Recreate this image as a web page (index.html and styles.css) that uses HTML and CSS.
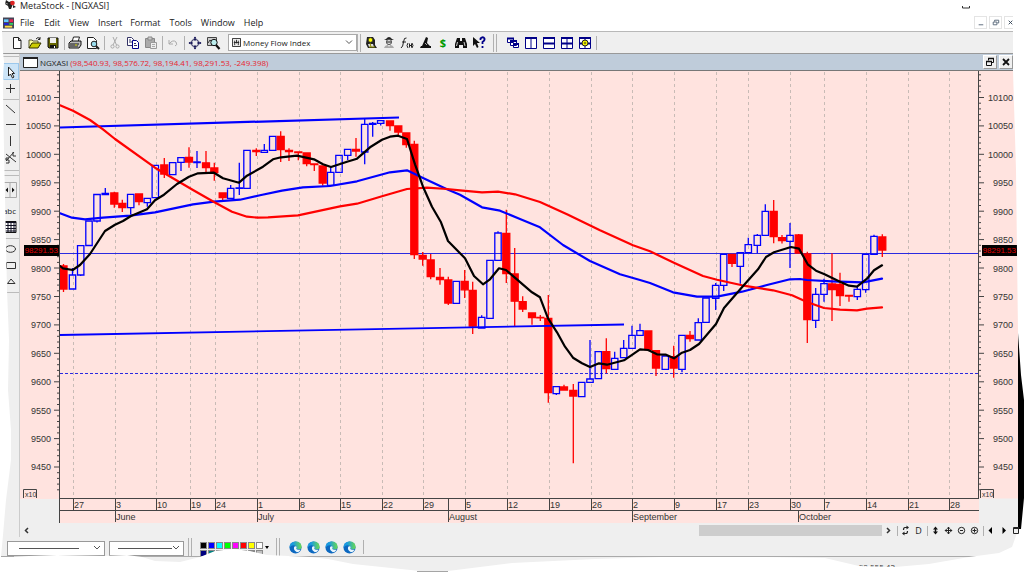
FILE: index.html
```html
<!DOCTYPE html>
<html lang="en">
<head>
<meta charset="utf-8">
<title>MetaStock - [NGXASI]</title>
<link rel="stylesheet" href="styles.css">
</head>
<body>
<div class="app">
  <header class="titlebar">
    <svg class="logo" viewBox="0 0 12 10"><path d="M1 0l3 2 3-1 1 3-2 5H4L3 6 0 4z" fill="#222"/><circle cx="7.500" cy="3" r="2.300" fill="#d22"/><path d="M8 5l3 2-3 1z" fill="#222"/><path d="M0 3l3 1" stroke="#888"/></svg>
    <span>MetaStock - [NGXASI]</span>
    <svg class="min-mark" viewBox="0 0 8 3"><path d="M.5 0v2h7V0" fill="none" stroke="#333"/></svg>
  </header>

  <nav class="menubar">
    <svg class="doc-icon" viewBox="0 0 12 12"><path fill="#445" d="M0 0h12v12H0z"/><path fill="#6cf" d="M1 2h5v3H1z"/><path fill="#e25" d="M7 2h4v3H7z"/><path fill="#22d" d="M1 6h5v2H1z"/><path fill="#3c6" d="M7 6h4v2H7z"/><path fill="#fd4" d="M2 9h8v2H2z"/></svg>
    <button class="m m-file">File</button><button class="m m-edit">Edit</button><button class="m m-view">View</button><button class="m m-insert">Insert</button><button class="m m-format">Format</button><button class="m m-tools">Tools</button><button class="m m-window">Window</button><button class="m">Help</button>
    <span class="mdi-buttons">
      <button aria-label="Minimize"><svg viewBox="0 0 12 12"><path d="M4 8.500h5" stroke="#567"/></svg></button>
      <button aria-label="Restore"><svg viewBox="0 0 12 12"><path d="M5 5V3.500h4.500V6.500H8M3.500 5.500h4v3h-4z" fill="none" stroke="#567"/></svg></button>
      <button aria-label="Close"><svg viewBox="0 0 12 12"><path d="M4 4l4 4M8 4L4 8" stroke="#345"/></svg></button>
    </span>
  </nav>

  <div class="toolbar">
    <button aria-label="New"><svg viewBox="0 0 16 16"><path d="M4.500 2.500h5l2.500 3v8H4.500z" fill="#fff" stroke="#222"/><path d="M9.500 2.500v3H12" fill="none" stroke="#222"/></svg></button>
    <button aria-label="Open"><svg viewBox="0 0 16 16"><path d="M2 13V5h3l1 1h5v2" fill="#ffffa0" stroke="#553" /><path d="M2 13l3-5h9l-3 5z" fill="#cc0" stroke="#330"/><path d="M9 4q2-3 4 0M13 2v2.500h-2" fill="none" stroke="#222"/></svg></button>
    <button aria-label="Save"><svg viewBox="0 0 16 16"><path d="M3 3h10v10H4l-1-1z" fill="#660" stroke="#111"/><path d="M5 3h6v5H5z" fill="#eee"/><path d="M5 10h6v3H5z" fill="#111"/><path d="M9 11h1v2H9z" fill="#fff"/></svg></button>
    <i class="sep"></i>
    <button aria-label="Print"><svg viewBox="0 0 16 16"><path d="M5 7l1.500-5h6L11 7" fill="#fff" stroke="#222"/><path d="M2 8l2-2h10v4l-2 3H2z" fill="#bbb" stroke="#111"/><path d="M3 9h9M3 11h8" stroke="#111"/><path d="M8 10h2" stroke="#dd0"/></svg></button>
    <button aria-label="Print preview"><svg viewBox="0 0 16 16"><path d="M2.500 2.500h6l3 3v8h-9z" fill="#fff" stroke="#222"/><circle cx="9" cy="9" r="2.800" fill="#9de" stroke="#222"/><path d="M11 11l3 3" stroke="#222" stroke-width="2"/></svg></button>
    <i class="sep"></i>
    <button aria-label="Cut"><svg viewBox="0 0 16 16"><path d="M6 2l3.500 8M10 2L6 10" fill="none" stroke="#aaa"/><circle cx="5.500" cy="11.500" r="1.600" fill="none" stroke="#aaa"/><circle cx="10.500" cy="11.500" r="1.600" fill="none" stroke="#aaa"/></svg></button>
    <button aria-label="Copy"><svg viewBox="0 0 16 16"><path d="M2.500 2.500h4l2 2v6h-6z" fill="#fff" stroke="#336"/><path d="M7.500 5.500h4l2 2v6h-6z" fill="#fff" stroke="#008"/><path d="M4 5h2M4 7h3M9 8.500h2M9 10.500h3" stroke="#336"/></svg></button>
    <button aria-label="Paste"><svg viewBox="0 0 16 16"><path d="M2.500 3.500h9v9h-9z" fill="#aaa" stroke="#888"/><path d="M5 2h4v3H5z" fill="#ccc" stroke="#888"/><path d="M7.500 7.500h6v6h-6z" fill="#eee" stroke="#999"/><path d="M9 9.500h3M9 11.500h3" stroke="#aaa"/></svg></button>
    <i class="sep"></i>
    <button aria-label="Undo"><svg viewBox="0 0 16 16"><path d="M4 5v4h4M4 9q4-5 7-2 2 3-1 4" fill="none" stroke="#aaa"/></svg></button>
    <i class="sep"></i>
    <button aria-label="Crosshair"><svg viewBox="0 0 16 16"><circle cx="8" cy="8" r="3.700" fill="none" stroke="#225"/><path d="M8 2v4M8 10v4M2 8h4M10 8h4" stroke="#115"/><path d="M8 1.500L6.500 3.500h3zM8 14.500l-1.500-2h3zM1.500 8l2-1.500v3zM14.500 8l-2-1.500v3z" fill="#115"/></svg></button>
    <button aria-label="Zoom"><svg viewBox="0 0 16 16"><path d="M2.500 2.500h9v8h-9z" fill="#ccc" stroke="#444"/><path d="M3 8l2-3 2 2 3-3" fill="none" stroke="#333"/><circle cx="9" cy="7.500" r="3.200" fill="#bee" stroke="#111"/><path d="M11 10l3.500 4" stroke="#111" stroke-width="2.200"/></svg></button>
    <label class="combo">
      <svg viewBox="0 0 10 10"><path d="M.5.5h9v9h-9z" fill="#eee" stroke="#222"/><path d="M3 3v5M5 2v4M7 3v5M2 5h6" stroke="#222"/></svg>
      <select aria-label="Indicator"><option>Money Flow Index</option></select>
      <svg class="chev" viewBox="0 0 8 8"><path d="M1 2l3 3 3-3" fill="none" stroke="#555"/></svg>
    </label>
    <i class="sep seam"></i>
    <button aria-label="Expert advisor"><svg viewBox="0 0 16 16"><path d="M4 2h6l2 3v5l2 3H5L3 9z" fill="#222"/><circle cx="7.500" cy="5" r="2.200" fill="#ff0" stroke="#333" stroke-width=".6"/><path d="M5 9h5l1 3H6z" fill="#ddd"/><path d="M7 8l1 4M6 12h6" stroke="#880"/></svg></button>
    <button aria-label="Explorer"><svg viewBox="0 0 16 16"><path d="M5 4q3-4 6 0l2 1H3z" fill="#222"/><circle cx="8" cy="7" r="2.600" fill="#ddd" stroke="#555"/><path d="M6 7h4" stroke="#222"/><path d="M3 13q1-3 4-3l1 2 1-2q3 0 4 3z" fill="#aaa"/></svg></button>
    <button aria-label="Indicator builder"><svg viewBox="0 0 16 16"><path d="M7.500 3q-2.500-1-3 4t-2.500 6M3 7h4M9 8q-2 2.500 0 5M13 8q2 2.500 0 5M10.500 8.500v4M12.500 8.500v4M10.500 10.500h2" fill="none" stroke="#222"/></svg></button>
    <button aria-label="System tester"><svg viewBox="0 0 16 16"><path d="M9 2L5 11h8l-3-3 1-5zM3 13h11v-2H4z" fill="#111"/><path d="M8 8l2 2" stroke="#aaa"/></svg></button>
    <button class="dollar" aria-label="Downloader">$</button>
    <button aria-label="Find"><svg viewBox="0 0 16 16"><path d="M4 3h3v3h2V3h3l2 6v4h-4v-3H6v3H2V9z" fill="#111"/><path d="M4.500 7L3.500 11M11 7l1 4" stroke="#ccc"/></svg></button>
    <button aria-label="Context help"><svg viewBox="0 0 16 16"><path d="M2 2v9l2-2 2 4 1.500-1L6 8h3z" fill="#111"/><path d="M9.500 5V3.500q2.500-2.500 4 0 .5 2-2 3.500v2M11.500 11v2" fill="none" stroke="#008" stroke-width="1.800"/></svg></button>
    <i class="sep seam wide"></i>
    <button aria-label="Cascade"><svg viewBox="0 0 16 16"><path d="M2.500 3.500h6v4h-6zM5.500 6.500h6v4h-6zM8.500 8.500h5v4h-5z" fill="#fff" stroke="#008"/><path d="M2 3.500h7M5 6h7M8 9h6" stroke="#008" stroke-width="2"/></svg></button>
    <button aria-label="Tile columns"><svg viewBox="0 0 16 16"><path d="M2.500 2.500h11v11h-11zM8 3v10" fill="#fff" stroke="#008"/><path d="M2 3h12" stroke="#008" stroke-width="2"/></svg></button>
    <button aria-label="Tile rows"><svg viewBox="0 0 16 16"><path d="M2.500 2.500h11v11h-11z" fill="#fff" stroke="#008"/><path d="M2 3h12M2 8.500h12" stroke="#008" stroke-width="2"/></svg></button>
    <button aria-label="Tile grid"><svg viewBox="0 0 16 16"><path d="M2.500 2.500h11v11h-11zM8 3v10" fill="#fff" stroke="#008"/><path d="M2 3h12M2 8.500h12" stroke="#008" stroke-width="2"/></svg></button>
    <button aria-label="Layout options"><svg viewBox="0 0 16 16"><path d="M2.500 2.500h11v11h-11zM8 3v10" fill="#fff" stroke="#008"/><path d="M2 3h12M2 8.500h12" stroke="#008" stroke-width="2"/><circle cx="8" cy="8" r="3" fill="#ee0" stroke="#222"/><path d="M7 8h2" stroke="#222"/></svg></button>
    <i class="sep"></i>
  </div>

  <div class="workspace">
    <aside class="tools">
      <i class="grip"></i>
      <button class="on" aria-label="Select"><svg viewBox="0 0 16 16"><path d="M5.500 3v9l2-2 2 4 1.500-1-2-3.500h2.500z" fill="#fff" stroke="#222"/></svg></button>
      <button aria-label="Crosshair"><svg viewBox="0 0 16 16"><path d="M8.500 4v9M4 8.500h9" stroke="#333"/></svg></button>
      <i class="rule"></i>
      <button aria-label="Trendline"><svg viewBox="0 0 16 16"><path d="M4 4l9 8" stroke="#333"/></svg></button>
      <button aria-label="Horizontal line"><svg viewBox="0 0 16 16"><path d="M4 7.500h10" stroke="#333"/></svg></button>
      <button aria-label="Vertical line"><svg viewBox="0 0 16 16"><path d="M8.500 3v10" stroke="#333"/></svg></button>
      <button aria-label="Semilog trendline"><svg viewBox="0 0 16 16"><path d="M4 12L12 3M4 5l10 8M11 3v4h3M7 9H4v2h3v3H4" fill="none" stroke="#333"/></svg></button>
      <i class="gap"></i>
      <i class="grip"></i>
      <button class="pair" aria-label="Scroll tools"><svg viewBox="0 0 16 16"><path d="M1.500.5h13v15h-13zM8 .5v15" fill="#eee" stroke="#aaa"/><path d="M6 5.500v5L3.500 8zM10 5.500v5L12.500 8z" fill="#111"/></svg></button>
      <i class="rule none"></i>
      <button class="abc">abc</button>
      <button aria-label="Grid"><svg viewBox="0 0 16 16"><path d="M3 2.500h11v11H3z" fill="#fff" stroke="#111"/><path d="M3 3.500h11M3 6.500h11M3 9.500h11M3 12h11M6 3v10M9 3v10M12 3v10" stroke="#112"/></svg></button>
      <i class="rule tall"></i>
      <button aria-label="Ellipse"><svg viewBox="0 0 16 16"><ellipse cx="8.500" cy="8" rx="5" ry="3.300" fill="none" stroke="#333"/></svg></button>
      <button aria-label="Rectangle"><svg viewBox="0 0 16 16"><path d="M4.500 5.500h9v6h-9z" fill="none" stroke="#333"/></svg></button>
      <button aria-label="Triangle"><svg viewBox="0 0 16 16"><path d="M9 6l4 4.500H5.500z" fill="none" stroke="#333"/></svg></button>
      <i class="rule tall"></i>
    </aside>

    <main class="child">
      <div class="child-title">
        <svg viewBox="0 0 15 11"><path d="M.5.5h14v10H.5z" fill="#fff" stroke="#222"/><path d="M0 1h15" stroke="#222" stroke-width="2"/></svg>
        <span>NGXASI <b>(98,540.93, 98,576.72, 98,194.41, 98,291.53, -249.398)</b></span>
        <button class="push" aria-label="Restore chart"><svg viewBox="0 0 12 12"><path d="M4.500 4.500V2.500h5v4H8M2.500 5.500h5v4h-5z" fill="none" stroke="#111"/><path d="M4 2.500h6M2 5.500h6" stroke="#111" stroke-width="1.500"/></svg></button>
        <button aria-label="Close chart"><svg viewBox="0 0 12 12"><path d="M3 3l6 6M9 3L3 9" stroke="#111" stroke-width="1.800"/></svg></button>
      </div>
      <svg class="chart" id="chart" viewBox="20 71 1004 453" role="img" aria-label="NGXASI candlestick chart"></svg>
      <div class="scroll">
        <button aria-label="Scroll left"><svg viewBox="0 0 13 13"><path d="M8 4L5.500 6.500 8 9" fill="none" stroke="#333" stroke-width="1.500"/></svg></button>
        <div class="track"><div class="thumb"></div></div>
        <button aria-label="Scroll right"><svg viewBox="0 0 13 13"><path d="M5 4l2.500 2.500L5 9" fill="none" stroke="#333" stroke-width="1.500"/></svg></button>
        <i class="sep"></i>
        <button aria-label="Refresh"><svg viewBox="0 0 13 13"><path d="M8.500 3.500H6q-1.500 0-1.500 2.500M4.500 9.500H7q1.500 0 1.500-2.500" fill="none" stroke="#222" stroke-width="1.200"/><path d="M7.500 1.500v4l2.500-2zM5.500 7.500v4L3 9.500z" fill="#222"/></svg></button>
        <button class="per">D</button>
        <i class="sep"></i>
        <button aria-label="Expand vertical"><svg viewBox="0 0 13 13"><path d="M6.500 2.500L9 5.500H4zM6.500 10.500L9 7.500H4z" fill="#111"/><path d="M6.500 4v5" stroke="#111" stroke-width="1.500"/></svg></button>
        <button aria-label="Move"><svg viewBox="0 0 13 13"><path d="M6.500 3v7M3 6.500h7" stroke="#222"/><path d="M3 6.500l1.500-1.500v3zM10 6.500L8.500 5v3zM6.500 3L5 4.500h3zM6.500 10L5 8.500h3z" fill="#222" stroke="#222" stroke-width=".4"/></svg></button>
        <button aria-label="Zoom out"><svg viewBox="0 0 13 13"><circle cx="6.500" cy="6.500" r="3.200" fill="none" stroke="#222"/><path d="M5 6.500h3" stroke="#222"/></svg></button>
        <button aria-label="Zoom in"><svg viewBox="0 0 13 13"><circle cx="6.500" cy="6.500" r="3.200" fill="none" stroke="#222"/><path d="M4.500 6.500h4M6.500 4.500v4" stroke="#222"/></svg></button>
        <i class="sep"></i>
        <button aria-label="Previous"><svg viewBox="0 0 13 13"><path d="M7 3v7L3.500 6.500z" fill="#000"/></svg></button>
        <button aria-label="Next"><svg viewBox="0 0 13 13"><path d="M4.500 3v7L8 6.500z" fill="#000"/></svg></button>
        <button class="over" aria-label="Window"><svg viewBox="0 0 13 13"><path d="M2.500 3.500h5v6h-5zM2 4.500h6" fill="#efefef" stroke="#222"/></svg></button>
      </div>
    </main>
  </div>

  <div class="bottombar">
    <label class="style-pick long"><select aria-label="Line style"><option></option></select><svg viewBox="0 0 8 8"><path d="M1 2l3 3 3-3" fill="none" stroke="#555"/></svg></label>
    <label class="style-pick"><select aria-label="Line weight"><option></option></select><svg viewBox="0 0 8 8"><path d="M1 2l3 3 3-3" fill="none" stroke="#555"/></svg></label>
    <i class="sep seam"></i>
    <div class="palette">
      <button class="sw k" aria-label="Black"></button><button class="sw b" aria-label="Blue"></button><button class="sw c" aria-label="Cyan"></button><button class="sw g" aria-label="Green"></button><button class="sw p" aria-label="Magenta"></button><button class="sw r" aria-label="Red"></button><button class="sw y" aria-label="Yellow"></button><button class="sw w" aria-label="White"></button>
      <button class="sw nv" aria-label="Navy"></button><button class="sw tl" aria-label="Teal"></button><button class="sw dg" aria-label="Dark green"></button><button class="sw pu" aria-label="Purple"></button><button class="sw ma" aria-label="Maroon"></button><button class="sw ol" aria-label="Olive"></button><button class="sw gr" aria-label="Gray"></button><button class="sw si" aria-label="Silver"></button>
    </div>
    <button class="drop" aria-label="More colors"><svg viewBox="0 0 8 8"><path d="M2 3h4L4 6z" fill="#000"/></svg></button>
    <i class="sep seam"></i>
    <div class="edges" id="edges"></div>
    <i class="sep"></i>
  </div>
  <footer class="status"><span>98,555.42</span></footer>

  <svg class="torn" viewBox="0 0 1024 573" preserveAspectRatio="none" aria-hidden="true">
    <path fill="#fff" d="M0 31H2L3 52 4 62 3 90 4 150 7 290 9 340 8 390 11 430 11 460 6 500 3 535 1 557 57 555 105 556 127 555 142 557 155 561 180 562 200 557 215 551 233 549 250 551 267 555 310 557 328 559 353 564 420 571 448 571 512 563 595 559 662 557H763L825 558 859 566 895 567 929 564 969 557 999 553 1012 547 1018 530 1018 333 1016 170 1013 71V0H1024V573H0z"/>
    <path fill="#000" d="M1018 333l3 42 3 25v98l-3 31h-3z"/>
    <path stroke="#a5a5a5" d="M1 556.500h13M417 571.500h31"/>
  </svg>
</div>
<script src="chart.js"></script>
</body>
</html>
```
FILE: styles.css
```css
* { box-sizing: border-box; }
body { margin: 0; background: #fff; font-family: "Open Sans", "Noto Sans", sans-serif; font-size: 9px; color: #222; }
button { border: 0; padding: 0; margin: 0; background: none; font: inherit; color: inherit; line-height: 1; display: flex; align-items: center; justify-content: center; }
svg { display: block; }
i { flex: none; }
.app { position: relative; min-height: 100vh; display: flex; flex-direction: column; overflow: hidden; }
.titlebar { height: 14px; display: flex; align-items: flex-start; padding: 0 54px 0 5px; gap: 3px; line-height: 12px; }
.logo { width: 12px; height: 10px; }
.min-mark { width: 8px; height: 3px; margin: 6px 0 0 auto; }
.menubar { height: 18px; display: flex; align-items: center; padding: 0 7px 0 3px; border-bottom: 1px solid #b8b8b8; }
.doc-icon { width: 11px; height: 12px; margin-right: 6px; }
.m { height: 16px; margin-right: 9px; }
.m-file { margin-right: 10px; }
.m-insert { margin-right: 8px; }
.mdi-buttons { margin-left: auto; display: flex; gap: 2px; }
.mdi-buttons button { border: 1px solid #e4e4e4; width: 13px; height: 13px; }
.mdi-buttons svg { width: 11px; height: 11px; }
.toolbar { height: 22px; background: #efefef; display: flex; align-items: center; padding-left: 8px; border-bottom: 1px solid #999; }
.toolbar button { width: 18px; height: 18px; flex: none; }
.toolbar button svg { width: 16px; height: 16px; }
.sep { width: 4px; height: 14px; background: linear-gradient(90deg, transparent 2px, #b0b0b0 2px, #b0b0b0 3px, transparent 3px); }
.toolbar .seam { width: 5px; border-left: 1px solid #b0b0b0; height: 18px; }
.toolbar .wide { width: 5px; margin: 0 6px 0 5px; }
.combo { width: 129px; height: 17px; margin-left: 6px; background: #fff; border: 1px solid #aaa; display: flex; align-items: center; padding: 0 3px 0 3px; gap: 2px; }
.combo svg { width: 9px; height: 9px; flex: none; }
.combo .chev { width: 8px; }
.combo select { flex: 1; min-width: 0; border: 0; background: none; appearance: none; padding: 0; font: 8px "Open Sans", "Noto Sans", sans-serif; color: #222; }
.dollar { color: #090; font-weight: bold; font-size: 11px; }
.workspace { display: flex; background: #efefef; }
.tools { width: 20px; flex: none; display: flex; flex-direction: column; align-items: stretch; border-right: 1px solid #ccc; }
.tools button { height: 16px; }
.tools button svg { width: 16px; height: 16px; flex: none; }
.tools .on { height: 17px; background: #cce4f7; border: 1px solid #9cc8ec; margin-left: 3px; }
.grip { height: 9px; background: linear-gradient(transparent 2px, #bbb 2px, #bbb 3px, transparent 3px); }
.rule { height: 5px; background: linear-gradient(transparent 3px, #bbb 3px, #bbb 4px, transparent 4px); }
.none { background: none; }
.tall { height: 6px; }
.gap { height: 8px; background: linear-gradient(transparent 5px, #bbb 5px, #bbb 6px, transparent 6px); }
.tools .abc { font-size: 8px; }
.child { flex: 1; min-width: 0; }
.child-title { height: 17px; background: #bfccda; border-bottom: 1px solid #777; display: flex; align-items: center; padding: 0 11px 0 3px; gap: 2px; font-size: 8px; }
.child-title svg { width: 15px; height: 11px; }
.child-title b { font-weight: normal; color: #e8252f; }
.child-title button { width: 14px; height: 14px; background: #f0f0f0; border: 1px solid #fff; border-right-color: #999; border-bottom-color: #999; }
.child-title button svg { width: 12px; height: 12px; flex: none; }
.push { margin-left: auto; }
.chart { width: 100%; height: auto; background: #efefef; font-family: "Liberation Sans", Arial, sans-serif; font-size: 9px; }
.scroll { height: 13px; display: flex; align-items: center; }
.scroll button { width: 13px; height: 13px; flex: none; }
.scroll button svg { width: 13px; height: 13px; }
.scroll .sep { height: 10px; }
.scroll .over { position: relative; z-index: 2; }
.track { flex: 1; display: flex; justify-content: flex-end; }
.thumb { width: 21.5%; height: 11px; background: #cdcdcd; }
.per { font-size: 9px; }
.bottombar { height: 20px; background: #efefef; display: flex; align-items: center; padding-left: 7px; border-bottom: 1px solid #aaa; }
.style-pick { width: 75px; height: 15px; margin: 3px 4px 0 0; border: 1px solid #999; background: #fff; display: flex; align-items: center; padding-right: 3px; }
.style-pick select { flex: 1; min-width: 0; height: 13px; border: 0; appearance: none; background: linear-gradient(#555, #555) 8px 6px / 54px 1px no-repeat; }
.style-pick.long { width: 98px; }
.style-pick.long select { background-position: 11px 6px; background-size: 60px 1px; }
.style-pick svg { width: 8px; height: 8px; }
.bottombar .seam { width: 6px; height: 18px; border-left: 1px solid #b0b0b0; }
.palette { display: grid; grid-template-columns: repeat(8, 7px); gap: 1px; margin: 5px 0 0 6px; }
.sw { height: 7px; border: 1px solid #888; background: #000; }
.sw.b { background: #00f; } .sw.c { background: #0ff; } .sw.g { background: #0f0; } .sw.p { background: #f0f; } .sw.r { background: #f00; } .sw.y { background: #ff0; } .sw.w { background: #fff; }
.sw.nv { background: #000080; } .sw.tl { background: #008080; } .sw.dg { background: #008000; } .sw.pu { background: #800080; } .sw.ma { background: #800000; } .sw.ol { background: #808000; } .sw.gr { background: #808080; } .sw.si { background: #c0c0c0; }
.drop { width: 8px; height: 8px; margin-right: 5px; }
.drop svg { width: 8px; }
.edges { display: flex; gap: 5px; padding: 2px 5px 0 7px; }
.edges a, .edges svg { width: 13px; height: 13px; display: block; }
.status { flex: 1; min-height: 16px; background: #efefef; display: flex; justify-content: flex-end; }
.status span { margin-right: 129px; padding: 4px 0 0; line-height: 12px; color: #333; font-size: 8px; }
.torn { position: absolute; inset: 0; width: 100%; height: 100%; pointer-events: none; }
.txt { fill: #333; }
.end { text-anchor: end; }
.tag { fill: #e00000; font-size: 8px; }
.tiny { font-size: 7px; }
.up { fill: none; stroke: #00f; stroke-width: 1.300; }
.down { fill: #f00; stroke: #f00; stroke-width: 1.300; }
.grid { stroke: #c8bbb6; stroke-dasharray: 3 3; }
.axis { stroke: #444; fill: none; }
.level { stroke: #2a2ae0; fill: none; }
.ma { fill: none; stroke-width: 2.200; stroke-linejoin: round; stroke-linecap: round; }
```
FILE: chart.js
```js
// Candles: [x, high, body top, body bottom, low, 'u' rising | 'd' falling]
const candles = [
[63.5,264,266,289,292,'d'],[72.5,268,275,289,289,'u'],[80.7,245.7,245.7,275,276,'u'],[89,221,221,245.5,245.5,'u'],[97,194.5,194.5,221,222.5,'u'],[105.3,188,193.5,194.5,194.5,'u'],
[114.3,191.7,193,204,207.7,'d'],[122.3,199.7,203.5,207.5,212,'d'],[130.7,194.3,194.3,207.7,214.3,'u'],[139,193.7,194,201.5,205.3,'d'],[147.3,198.3,198.3,202.7,206.7,'u'],[155.3,165.3,165.3,197.7,197.7,'u'],
[164.3,158,165,174,178,'d'],[172.7,162.7,162.7,174.7,174.7,'u'],[181,157.7,157.7,162.3,171,'u'],[189,147.3,157.5,162,167.7,'d'],[197,151,162,162.6,168,'u'],[206,151,162.8,167.5,174,'d'],[214.3,162.7,168,172.5,180.7,'d'],[222.7,193,193,197.5,200.7,'d'],
[230.7,185,188.3,198.3,198.3,'u'],[239.3,162.7,187.8,188.4,195,'u'],[247,150.3,150.3,188.3,188.3,'u'],[256.3,148.3,150.5,151.5,156,'d'],[264.3,144,150.3,152.3,152.3,'u'],[272.7,136.3,136.3,150.3,150.3,'u'],[280.7,131.3,136.3,149.5,162,'d'],[289,148.3,150.5,151.5,161,'d'],
[298.3,152,152,152.5,160.3,'d'],[306.7,152.5,153,163.5,166.3,'d'],[314.3,164,164,164.5,171,'d'],[322.7,165.5,166,183,185.7,'d'],[330.7,167.3,172.3,185.3,185.3,'u'],[339,155.3,155.3,172.3,172.3,'u'],[347.7,149.3,149.3,155.3,160,'u'],[356,138,149.5,151,156.7,'d'],
[364.7,118.3,124.3,152,164.3,'u'],[372.7,122,123.5,124.3,136.7,'u'],[380.7,120.7,120.7,123.3,125.5,'u'],[390,120.5,121,125.5,130.7,'d'],[398.3,125.5,126,132,135.7,'d'],[406.3,132.5,133,144.5,147.7,'d'],[414.3,140.7,144.5,254.5,259,'d'],
[422.7,252,255.5,259,265.7,'d'],[430.7,254,260,276.5,279.3,'d'],[440,268,277.5,279.5,284.7,'d'],[448.3,276.7,280,303,305,'d'],[456.3,281.3,281.3,303.3,303.3,'u'],[464.7,270,281.5,289.8,298,'d'],[472.7,281.7,290.5,326.2,334,'d'],[481.7,315.3,317.3,328,328,'u'],
[490,260.3,260.3,318.3,318.3,'u'],[498,231.3,233,260.3,260.3,'u'],[506.3,209.7,233.5,273.5,283,'d'],[514.7,248,274,301.2,326.3,'d'],[522.7,296.3,301.7,309,312,'d'],[532,312.5,313,317.5,324.7,'d'],[540.3,315,317.3,317.8,321,'d'],[548.3,295,318.5,392.5,402.7,'d'],
[556.3,386.7,386.7,393.7,395,'u'],[564,384.7,387,390,390.5,'d'],[573.3,384,390.5,396,463.3,'d'],[581.7,382.3,382.3,396.7,396.7,'u'],[590,340,379,382.3,382.3,'u'],[598.3,351.7,351.7,378.7,378.7,'u'],[606.3,338.3,351.7,368.5,373.3,'d'],[614.7,351.7,358.3,369.3,369.3,'u'],
[623.7,340,348.3,357.7,357.7,'u'],[632,325.7,335.3,348.3,348.3,'u'],[640,323.7,330.7,335.3,335.3,'u'],[648.3,331,331,349.5,349.5,'d'],[656,350,350.7,368,376,'d'],[665.3,356,356,369.3,369.3,'u'],[673.7,345.7,356.7,368,377.7,'d'],[682,335.3,335.3,369.3,372.3,'u'],
[690,331,335.3,338.7,341.7,'d'],[698.3,318.3,322.7,340,340,'u'],[706,298,298,322.3,322.3,'u'],[715.7,283,285.3,298.3,310,'u'],[723.7,254.3,254.3,285.3,291,'u'],[732,254.5,254.5,263.3,267,'d'],[740.3,252.7,252.7,266.3,283.7,'u'],[748.3,237.7,244.7,252.7,252.7,'u'],
[757.3,234,235.3,245.3,253.3,'u'],[765.3,204.3,211.3,235.3,235.3,'u'],[773.7,200,211.3,236.7,243.3,'d'],[782,235,237.7,240.5,243.5,'d'],[790,223,235.3,241.3,268,'u'],[798.7,234,235,253,253,'d'],[807.3,251.7,254,319.7,343,'d'],[815.7,288,294.3,320.3,328,'u'],
[824,278.7,283.7,294.3,301.7,'u'],[832,253.3,284,289.7,321,'d'],[840,272.7,284.3,295.7,306,'d'],[849,295.5,295.5,296,301.7,'d'],[857.3,286.7,289.3,296.7,300,'u'],[865.7,254.3,254.3,289.7,292.7,'u'],[874,234.7,236.3,254.3,254.3,'u'],[882.3,234.3,237,250,257,'d']
];
const redMA = "60,105.3 73,110.700 90,120 103,129.300 115,139 155,167.700 193,190 214,202 232,211.700 247,216.700 258,217.700 268,217.300 298,215.300 340,206.300 357,203.700 382,196.300 407,189 427,187.700 447,189 460,190.300 482,192.300 498,191.700 515,194.300 540,202 567,214.300 600,230.300 633,245.300 650,251.300 675,263.300 703,276 717,279.700 742,285.300 773,290.300 792,295.300 807,302 824,308 840,309.700 857,310.300 867,308.700 882,307.300";
const blueMA = "60,213.300 72,217.700 85,219.300 103,217.700 130,215.700 155,212.300 193,204.300 214,201.700 240,199.700 260,195.300 282,190.700 303,187.300 330,186 357,181.300 390,172.300 407,170.300 423,178 447,189.300 460,194.700 482,207.300 500,210.700 520,219 540,227.300 563,245 590,261 620,274.300 640,280 650,283 673,292.300 697,296.700 717,296.700 742,291.700 767,285 790,279.300 800,279 807,280 832,281.300 863,282.300 882,278.700";
const blackMA = "60,266 63,268.300 72.700,270 80,265 90,254 105,231 115,224.700 123,221 131,216 147,209.300 155,200.300 164,194.700 177,184 189,176.700 198,173.300 214,172.700 223,178.300 239,182.700 247,175.700 263,166.700 273,159.300 281,157.300 297,155.700 314,159.300 323,164.300 331,167 347,161.700 357,158.700 370,147.300 382,139.700 390,136.700 398,135.700 407,139 415,164.300 423,186.700 432,206.700 441,222.300 448,241 465,258.300 474,276 483,284.300 490,279.300 499,268.300 506,270 532,292.300 540,297.300 548,318.300 557,332.300 565,346.700 573,357.700 582,363.300 590,367 599,363.300 607,364.700 624,360.300 640,349.300 648,350 657,354.300 666,354.700 674,358.300 682,352.700 690,350 699,344 716,324 724,308 742,287.300 758,269.300 766,257 774,252.300 791,247 799,248.700 808,264.700 816,270.700 824,274 840,281.700 849,285.700 857,286.700 867,278.700 874,270.300 882,265.300";
const days = [[73,'27'],[115,'3'],[156,'10'],[190,'19'],[215,'24'],[257,'1'],[299,'8'],[340,'15'],[382,'22'],[423,'29'],[465,'5'],[507,'12'],[549,'19'],[591,'26'],[632,'2'],[674,'9'],[716,'17'],[748,'23'],[790,'30'],[824,'7'],[866,'14'],[908,'21'],[949,'28']];
const months = [[115,'June'],[257,'July'],[448,'August'],[632,'September'],[798,'October']];

let s = '<path d="M20 71h1004v427.500H20zM59 498h920v25H59z" fill="#ffe3df"/>';
days.forEach(([x]) => { s += `<path class="grid" d="M${x + .5} 72V498"/>`; });
s += '<path class="level" d="M60 253.500H978"/><path class="level" d="M60 373.500H978" stroke-dasharray="3 2"/>';

candles.forEach(([x, hi, top, bot, lo, kind]) => {
  if (kind === 'u') {
    s += `<path class="up" d="M${x} ${hi}V${top}M${x} ${bot}V${lo}M${x - 3.2} ${top}h6.4V${bot}h-6.400z"/>`;
  } else {
    s += `<path class="down" d="M${x} ${hi}V${lo}M${x - 3.5} ${top}h7V${bot}h-7z"/>`;
  }
});
s += '<path d="M60 127.500L399 117.500" stroke="#00f" stroke-width="2.200"/><path d="M60 335L624 324.500" stroke="#00f" stroke-width="1.800"/>';
s += `<polyline class="ma" stroke="#00f" points="${blueMA}"/><polyline class="ma" stroke="#f00" points="${redMA}"/><polyline class="ma" stroke="#000" points="${blackMA}"/>`;

// Price scales: 50 points per major tick, five minor steps in each
s += '<path d="M20 71h39.500v428H20z" fill="#ffe3df"/>';
let ticks = '';
for (let n = -4; n <= 69; n++) {
  const y = (97.5 + n * 5.685).toFixed(1);
  const len = n % 5 === 0 ? 5 : 2;
  ticks += `M59 ${y}h-${len}M979 ${y}h${len}`;
}
s += `<path class="axis" d="${ticks}M59.500 71V523M978.500 71V498.500M59 498.500H979M59 510.500H979"/>`;
for (let i = 0; i < 14; i++) {
  if (10100 - i * 50 < 9450) break;
  const y = Math.round(101 + i * 28.42);
  s += `<text class="txt end" x="51" y="${y}">${10100 - i * 50}</text><text class="txt end" x="1013" y="${y}">${10100 - i * 50}</text>`;
}
s += '<path d="M24 245h35v11H24zM982 245h35v11h-35z"/><text class="tag end" x="58" y="253">98291.53</text><text class="tag end" x="1016" y="253">98291.53</text>';
s += '<path class="axis" d="M23.500 498V489.500h13V498M980.500 498V489.500h13V498"/><text class="txt tiny" x="25" y="497">x10</text><text class="txt tiny" x="982" y="497">x10</text>';
days.forEach(([x, t]) => { s += `<path class="axis" d="M${x + .5} 498v12"/><text class="txt" x="${x + 1}" y="508">${t}</text>`; });
months.forEach(([x, t]) => { s += `<path class="axis" d="M${x + .5} ${t === 'August' ? 498 : 510}V522"/><text class="txt" x="${x + 1}" y="520">${t}</text>`; });
document.getElementById('chart').innerHTML = s;

let e = '';
for (let i = 0; i < 4; i++) {
  e += `<a href="#" aria-label="Web link ${i + 1}"><svg viewBox="0 0 14 14"><defs><linearGradient id="e${i}" x1="0" y1="0" x2="1" y2="0"><stop offset=".3" stop-color="#1a9be0"/><stop offset="1" stop-color="#6bdc4e"/></linearGradient></defs><circle cx="7" cy="7" r="6.500" fill="#0c68c0"/><path d="M.5 7Q1 .5 7 .5q6.500 0 6.500 6 0 2.500-3 2.500H8q1.500-2-.5-3.500Q4 3 .5 7z" fill="url(#e${i})"/><path d="M5.500 6.500q1-1.500 2.500-.5.700 1.200-.2 2.200Q8 10 12.500 9.300 11 12 8.500 12 4.500 10 5.500 6.500z" fill="#eaf6fc"/></svg></a>`;
}
document.getElementById('edges').innerHTML = e;
```
